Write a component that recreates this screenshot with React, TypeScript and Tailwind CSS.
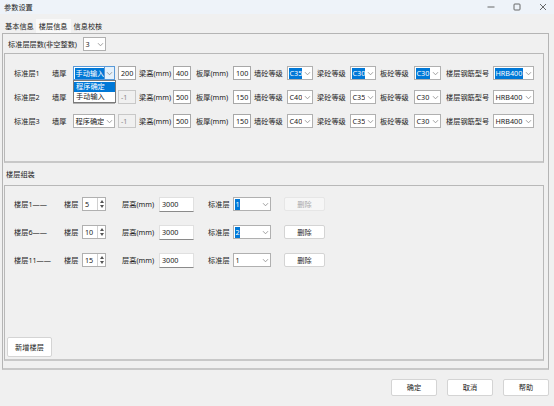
import type { ReactNode } from "react"

function Chevron() {
  return (
    <svg width="7" height="5" viewBox="0 0 7 5" className="shrink-0">
      <path d="M1 1.2 L3.5 3.8 L6 1.2" fill="none" stroke="#8a8a8a" strokeWidth="0.8" />
    </svg>
  )
}

function Select({ value, w, sel, focus }: { value: string; w: string; sel?: boolean; focus?: boolean }) {
  return (
    <div
      className={`flex h-[14px] shrink-0 items-center overflow-hidden border bg-white ${w} ${
        focus ? "border-[#5a9ad8]" : "border-[#b0b0b0]"
      }`}
    >
      <div className="flex min-w-0 flex-1 items-center overflow-hidden whitespace-nowrap pl-[1px]">
        <span className={`px-[0.5px] leading-[11px] ${sel ? "bg-[#0078d7] text-white" : "text-[#222]"}`}>{value}</span>
      </div>
      <div
        className={`flex h-full w-[10px] shrink-0 items-center justify-center ${
          focus ? "border-l border-[#5a9ad8] bg-[#e5f1fb]" : ""
        }`}
      >
        <Chevron />
      </div>
    </div>
  )
}

function Input({ value, w, disabled }: { value: string; w: string; disabled?: boolean }) {
  return (
    <div
      className={`flex h-[14px] shrink-0 items-center whitespace-nowrap border pl-[2px] ${w} ${
        disabled ? "border-[#c8c8c8] bg-[#f0f0f0] text-[#8a8a8a]" : "border-[#a8a8a8] bg-white text-[#222]"
      }`}
    >
      {value}
    </div>
  )
}

function Spin({ value }: { value: string }) {
  return (
    <div className="flex h-[14px] w-[24px] shrink-0 items-center border border-[#b0b0b0] bg-white">
      <span className="flex-1 pl-[2px] text-[#222]">{value}</span>
      <div className="flex h-full w-[8px] flex-col items-center justify-center gap-[2px] border-l border-[#d0d0d0]">
        <svg width="4" height="3" viewBox="0 0 4 3">
          <path d="M0 3 L2 0 L4 3 Z" fill="#555" />
        </svg>
        <svg width="4" height="3" viewBox="0 0 4 3">
          <path d="M0 0 L2 3 L4 0 Z" fill="#555" />
        </svg>
      </div>
    </div>
  )
}

function Label({ children, w }: { children: ReactNode; w: string }) {
  return <span className={`shrink-0 whitespace-nowrap text-[#222] ${w}`}>{children}</span>
}

function Btn({ children, w, h, disabled }: { children: ReactNode; w: string; h: string; disabled?: boolean }) {
  return (
    <div
      className={`flex shrink-0 items-center justify-center rounded-[2px] border ${w} ${h} ${
        disabled ? "border-[#e6e6e6] bg-[#f6f6f6] text-[#a8a8a8]" : "border-[#d4d4d4] bg-white text-[#222]"
      }`}
    >
      {children}
    </div>
  )
}

const layers = [
  { name: "标准层1", mode: "手动输入", wall: "200", beam: "400", slab: "100", c1: "C35", c2: "C30", c3: "C30", sel: true },
  { name: "标准层2", mode: "程序确定", wall: "-1", beam: "500", slab: "150", c1: "C40", c2: "C35", c3: "C30", sel: false },
  { name: "标准层3", mode: "程序确定", wall: "-1", beam: "500", slab: "150", c1: "C40", c2: "C35", c3: "C30", sel: false },
]

const floors = [
  { name: "楼层1——", n: "5", std: "1", sel: true, disabled: true },
  { name: "楼层6——", n: "10", std: "2", sel: true, disabled: false },
  { name: "楼层11——", n: "15", std: "1", sel: false, disabled: false },
]

export default function App() {
  return (
    <div className="relative flex h-[406px] w-[554px] flex-col overflow-hidden bg-[#f0f0f0] font-['Noto_Sans','Noto_Sans_CJK_SC',sans-serif] text-[7.2px] text-[#222]">
      {/* title bar */}
      <div className="flex h-[14px] items-center justify-between bg-[#eef3f9] pl-[4px] pr-[7px]">
        <span className="text-[#222]">参数设置</span>
        <div className="flex items-center gap-[18px] text-[#333]">
          <svg width="8" height="8" viewBox="0 0 8 8">
            <path d="M0.5 4 H7.5" stroke="#444" strokeWidth="0.8" />
          </svg>
          <svg width="8" height="8" viewBox="0 0 8 8">
            <rect x="1" y="1" width="6" height="6" rx="0.8" fill="none" stroke="#444" strokeWidth="0.8" />
          </svg>
          <svg width="8" height="8" viewBox="0 0 8 8">
            <path d="M1 1 L7 7 M7 1 L1 7" stroke="#444" strokeWidth="0.8" />
          </svg>
        </div>
      </div>

      {/* tabs */}
      <div className="flex h-[19px] items-end pl-[3px]">
        <div className="flex h-[14px] items-center px-[2px]">基本信息</div>
        <div className="flex h-[14px] items-center bg-[#f9f9f9] px-[3px]">楼层信息</div>
        <div className="flex h-[14px] items-center px-[3px]">信息校核</div>
      </div>

      {/* tab panel */}
      <div className="ml-[2px] mr-[5px] flex h-[337px] flex-col border border-[#b4b4b4] border-b-[2px] border-b-[#c8c8c8] pl-[1px] pr-[4px]">
        <div className="flex h-[19px] items-center pl-[4px] pt-[1px]">
          <Label w="w-[75px]">标准层层数(非空整数)</Label>
          <Select value="3" w="w-[23px]" />
        </div>

        {/* group 1 */}
        <div className="relative flex h-[110px] flex-col gap-[10px] border border-[#b8b8b8] border-b-[2px] border-b-[#c8c8c8] pl-[9px] pt-[12px]">
          {layers.map((l, i) => (
            <div key={l.name} className="flex h-[14px] items-center">
              <Label w="w-[38px]">{l.name}</Label>
              <Label w="w-[21px]">墙厚</Label>
              <Select value={l.mode} w="w-[42px]" sel={i === 0} focus={i === 0} />
              <div className="w-[3px]" />
              <Input value={l.wall} w="w-[18px]" disabled={l.wall === "-1"} />
              <div className="w-[3px]" />
              <Label w="w-[34px]">梁高(mm)</Label>
              <Input value={l.beam} w="w-[18px]" />
              <div className="w-[5px]" />
              <Label w="w-[37px]">板厚(mm)</Label>
              <Input value={l.slab} w="w-[18px]" />
              <div className="w-[3px]" />
              <Label w="w-[33px]">墙砼等级</Label>
              <Select value={l.c1} w="w-[26px]" sel={l.sel} />
              <div className="w-[4px]" />
              <Label w="w-[33px]">梁砼等级</Label>
              <Select value={l.c2} w="w-[26px]" sel={l.sel} />
              <div className="w-[4px]" />
              <Label w="w-[34px]">板砼等级</Label>
              <Select value={l.c3} w="w-[27px]" sel={l.sel} />
              <div className="w-[5px]" />
              <Label w="w-[47px]">楼层钢筋型号</Label>
              <Select value="HRB400" w="w-[41px]" sel={l.sel} />
            </div>
          ))}
          {/* open dropdown list */}
          <div className="absolute left-[68px] top-[26px] flex w-[43px] flex-col border border-[#7a7a7a] bg-white py-[0.5px]">
            <div className="flex h-[10px] items-center whitespace-nowrap bg-[#0078d7] pl-[2px] text-white">程序确定</div>
            <div className="flex h-[10px] items-center whitespace-nowrap pl-[2px] text-[#222]">手动输入</div>
          </div>
        </div>

        <div className="flex h-[22px] items-center pl-[2px] pt-[1px]">楼层组装</div>

        {/* group 2 */}
        <div className="flex h-[176px] flex-col border border-[#b8b8b8] border-b-[2px] border-b-[#c8c8c8] pb-[2px]">
          <div className="flex flex-col gap-[14px] pl-[9px] pt-[11px]">
            {floors.map((f) => (
              <div key={f.name} className="flex h-[14px] items-center">
                <Label w="w-[50px]">{f.name}</Label>
                <Label w="w-[18px]">楼层</Label>
                <Spin value={f.n} />
                <div className="w-[16px]" />
                <Label w="w-[37px]">层高(mm)</Label>
                <div className="flex h-[15px] w-[35px] shrink-0 items-center border border-[#e0e0e0] border-b-[#8a8a8a] bg-white pl-[2px]">
                  3000
                </div>
                <div className="w-[14px]" />
                <Label w="w-[25px]">标准层</Label>
                <Select value={f.std} w="w-[38px]" sel={f.sel} />
                <div className="w-[13px]" />
                <Btn w="w-[41px]" h="h-[14px]" disabled={f.disabled}>
                  删除
                </Btn>
              </div>
            ))}
          </div>
          <div className="flex-1" />
          <div className="pl-[2px]">
            <Btn w="w-[45px]" h="h-[20px]">新增楼层</Btn>
          </div>
        </div>
      </div>

      {/* footer buttons */}
      <div className="flex justify-end gap-[10px] pr-[5px] pt-[9px]">
        <Btn w="w-[46px]" h="h-[17px]">确定</Btn>
        <Btn w="w-[46px]" h="h-[17px]">取消</Btn>
        <Btn w="w-[46px]" h="h-[17px]">帮助</Btn>
      </div>
    </div>
  )
}
